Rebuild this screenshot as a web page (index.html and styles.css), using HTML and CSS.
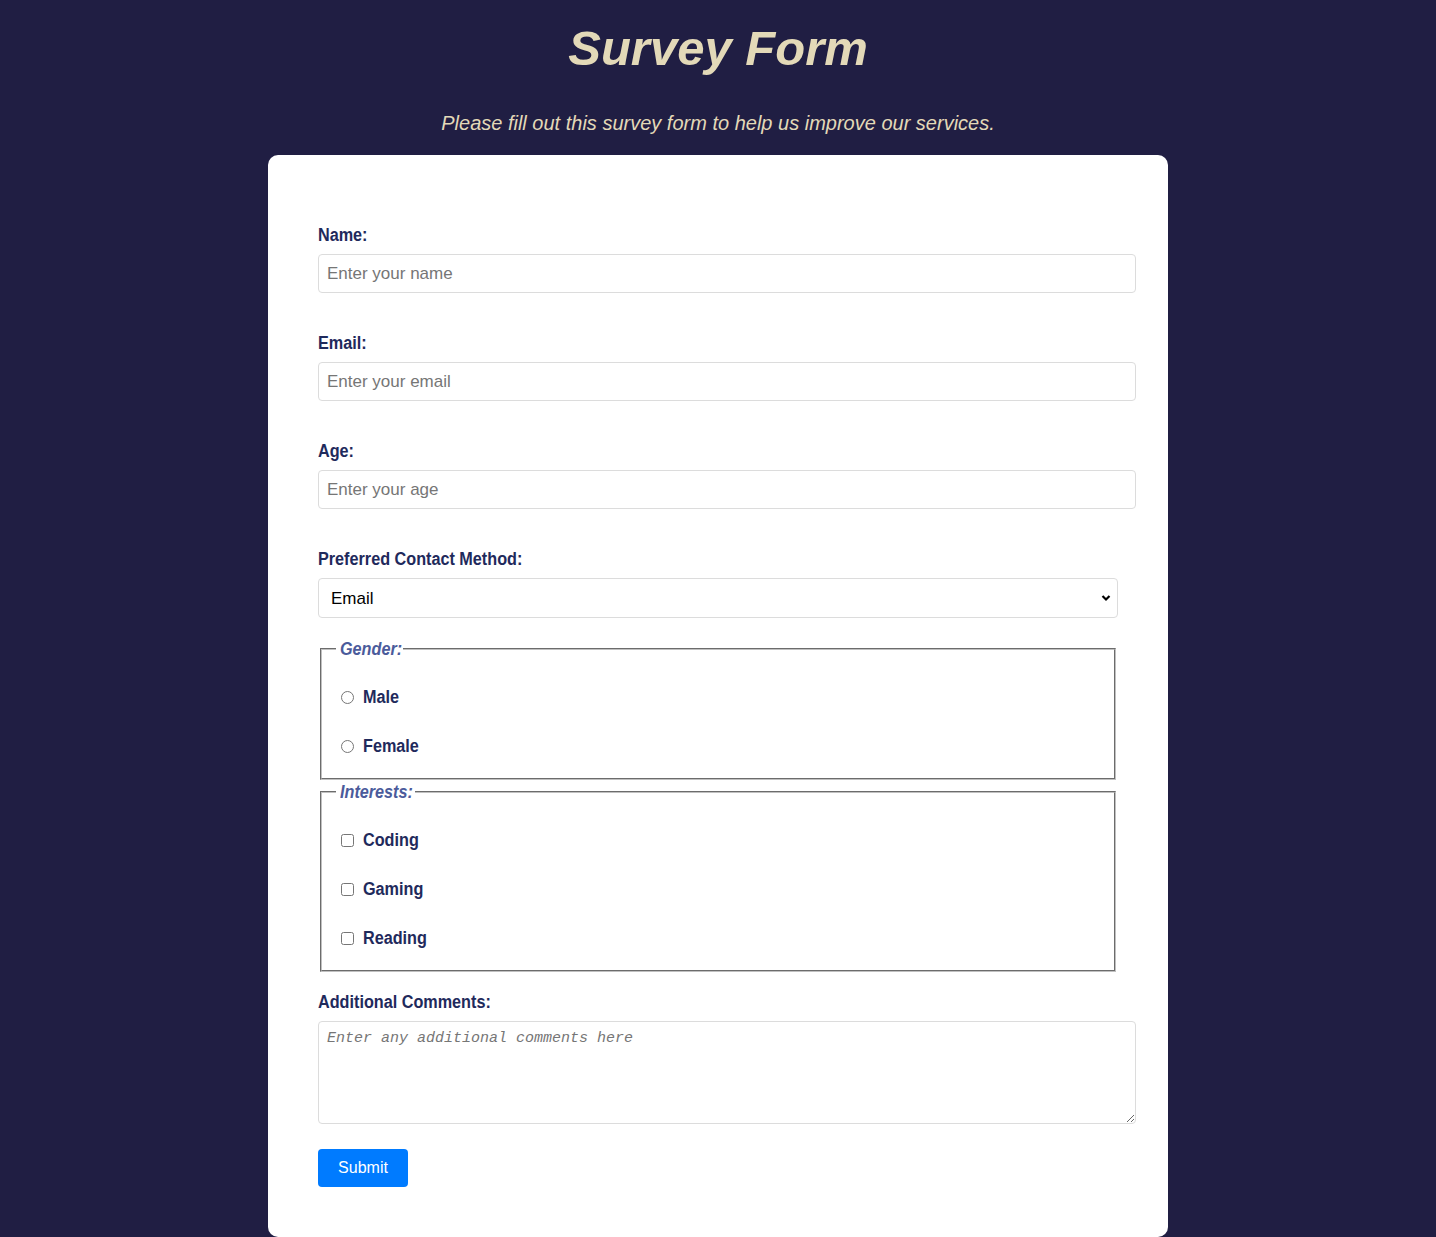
FILE: index.html
```html
<!DOCTYPE html>
<html lang="en">
<head>
<meta charset="utf-8">
<title>Survey Form</title>
<link rel="stylesheet" href="styles.css">
</head>
<body>
  <header class="page-header">
    <h1 id="title" class="title">Survey Form</h1>
    <p id="description" class="description">Please fill out this survey form to help us improve our services.</p>
  </header>
  <form id="survey-form" class="card">
    <label class="field-label" for="name"><span class="cond">Name:</span></label>
    <input class="text-input" id="name" type="text" placeholder="Enter your name">

    <label class="field-label" for="email"><span class="cond">Email:</span></label>
    <input class="text-input" id="email" type="email" placeholder="Enter your email">

    <label class="field-label" for="age"><span class="cond">Age:</span></label>
    <input class="text-input" id="age" type="number" placeholder="Enter your age">

    <label class="field-label" for="dropdown"><span class="cond">Preferred Contact Method:</span></label>
    <select class="select" id="dropdown">
      <option>Email</option>
      <option>Phone</option>
      <option>Mail</option>
    </select>

    <fieldset class="group">
      <legend class="group-legend"><span class="cond">Gender:</span></legend>
      <label class="option"><input type="radio" name="gender" value="male"><span class="cond">Male</span></label>
      <label class="option"><input type="radio" name="gender" value="female"><span class="cond">Female</span></label>
    </fieldset>

    <fieldset class="group">
      <legend class="group-legend"><span class="cond">Interests:</span></legend>
      <label class="option"><input type="checkbox" value="coding"><span class="cond">Coding</span></label>
      <label class="option"><input type="checkbox" value="gaming"><span class="cond">Gaming</span></label>
      <label class="option"><input type="checkbox" value="reading"><span class="cond">Reading</span></label>
    </fieldset>

    <label class="field-label after-group" for="comments"><span class="cond">Additional Comments:</span></label>
    <textarea class="textarea" id="comments" placeholder="Enter any additional comments here"></textarea>

    <button class="submit" id="submit" type="submit">Submit</button>
  </form>
</body>
</html>
```
FILE: styles.css
```css
html, body {
  margin: 0;
  padding: 0;
}
body {
  background: #201e43;
  font-family: "Liberation Sans", Arial, sans-serif;
}
.page-header {
  text-align: center;
  color: #e3d9b8;
}
.title {
  margin: 0;
  padding-top: 20px;
  font-size: 49px;
  line-height: 56px;
  font-style: italic;
  font-weight: bold;
}
.description {
  margin: 36px 0 20px;
  font-size: 20px;
  line-height: 23px;
  font-style: italic;
}
.card {
  box-sizing: border-box;
  width: 900px;
  margin: 0 auto;
  padding: 70px 50px 50px;
  background: #fff;
  border-radius: 10px;
}
.cond {
  display: inline-block;
  transform: scaleX(0.9);
  transform-origin: left center;
  margin-right: -0.45em;
}
.field-label {
  display: block;
  margin: 0 0 8px;
  font-weight: bold;
  font-size: 18px;
  line-height: 21px;
  color: #1f2a5c;
}
.field-label.after-group {
  margin-top: 20px;
}
.text-input {
  display: block;
  width: 100%;
  box-sizing: content-box;
  margin: 0 0 40px;
  padding: 8px;
  height: 21px;
  font-family: "Liberation Sans", Arial, sans-serif;
  font-size: 17px;
  line-height: 21px;
  border: 1px solid #dcdcdc;
  border-radius: 4px;
  color: #222;
  outline: none;
}
.text-input::placeholder,
.textarea::placeholder {
  color: #767676;
}
.select {
  display: block;
  box-sizing: border-box;
  width: 100%;
  height: 40px;
  margin: 0 0 20px;
  padding: 0 30px 0 12px;
  font-family: "Liberation Sans", Arial, sans-serif;
  font-size: 17px;
  color: #000;
  background-color: #fff;
  background-image: url("data:image/svg+xml;utf8,<svg xmlns='http://www.w3.org/2000/svg' width='10' height='8' viewBox='0 0 10 8'><path d='M1.5 2 L5 5.5 L8.5 2' fill='none' stroke='black' stroke-width='2.2'/></svg>");
  background-repeat: no-repeat;
  background-position: right 6px center;
  border: 1px solid #dcdcdc;
  border-radius: 4px;
  appearance: none;
  -webkit-appearance: none;
}
.group {
  margin: 0 2px;
  padding: 0 14px 21px 14px;
  border: 2px groove #c0c0c0;
  display: flex;
  flex-direction: column;
  align-items: flex-start;
}
.group + .group {
  margin-top: 1px;
}
.group-legend {
  padding: 0 2px 0 4px;
  font-weight: bold;
  font-style: italic;
  font-size: 18px;
  line-height: 22px;
  color: #4b5b9b;
}
.option {
  display: flex;
  align-items: center;
  height: 21px;
  margin-top: 28px;
  font-weight: bold;
  font-size: 18px;
  line-height: 21px;
  color: #1f2a5c;
}
.option:first-of-type {
  margin-top: 27px;
}
.option input {
  margin: 0 9px 0 5px;
  width: 13px;
  height: 13px;
}
.textarea {
  display: block;
  box-sizing: content-box;
  width: 100%;
  height: 85px;
  margin: 0 0 25px;
  padding: 8px;
  border: 1px solid #dcdcdc;
  border-radius: 4px;
  font-family: "Liberation Mono", "Courier New", monospace;
  font-style: italic;
  font-size: 15px;
  line-height: 18px;
  resize: vertical;
}
.submit {
  display: block;
  width: 90px;
  height: 38px;
  padding: 0;
  border: none;
  border-radius: 4px;
  background: #007bff;
  color: #fff;
  font-family: "Liberation Sans", Arial, sans-serif;
  font-size: 16px;
}
```
